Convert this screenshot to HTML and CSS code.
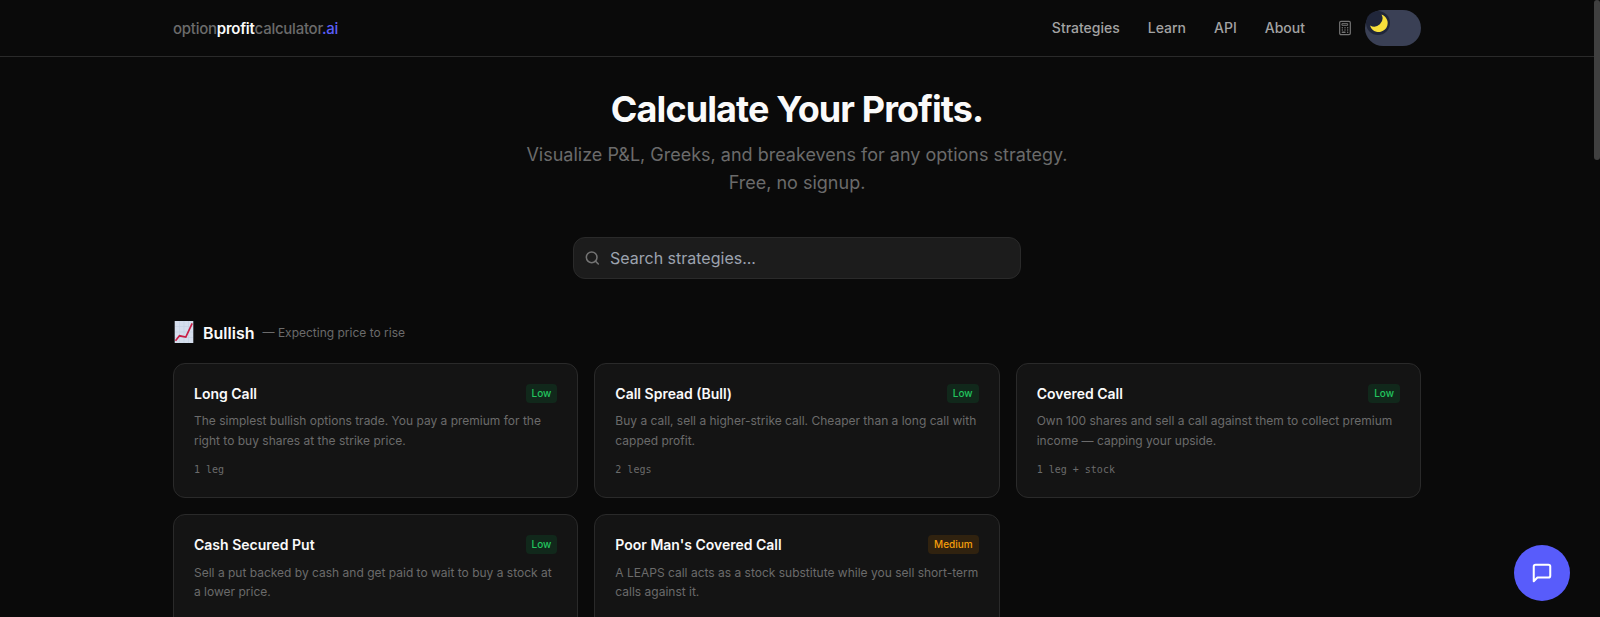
FILE: index.html
```html
<!DOCTYPE html>
<html lang="en">
<head>
<meta charset="utf-8">
<title>Option Profit Calculator</title>
<link rel="stylesheet" href="styles.css">
</head>
<body>
<div class="page">
  <header class="header">
    <div class="container header-row">
      <a class="logo">option<b>profit</b>calculator<i>.ai</i></a>
      <div class="header-right">
        <nav class="nav"><a>Strategies</a><a>Learn</a><a>API</a><a>About</a></nav>
        <svg class="calc" width="16" height="16" viewBox="0 0 24 24" fill="none" stroke="currentColor" stroke-width="1.8" stroke-linecap="round" stroke-linejoin="round"><rect x="4" y="2" width="16" height="20" rx="2"/><path d="M8 5.500h8v2.500H8z" stroke-width="1.500"/><path d="M8 11.500h.01M12 11.500h.01M16 11.500h.01M8 15h.01M12 15h.01M16 15h.01M8 18.500h4M16 18.500h.01" stroke-width="2.200"/></svg>
        <div class="toggle"><span class="knob"><svg width="20" height="20" viewBox="0 0 20 20"><path d="M13.500 1.500A9 9 0 1 1 2 12.500A8.300 8.300 0 0 0 13.500 1.500Z" fill="#f7df3b"/></svg></span></div>
      </div>
    </div>
  </header>
  <main class="container">
    <section class="hero">
      <h1>Calculate Your Profits.</h1>
      <p>Visualize P&amp;L, Greeks, and breakevens for any options strategy.<br>Free, no signup.</p>
      <div class="search">
        <svg width="16" height="16" viewBox="0 0 24 24" fill="none" stroke="currentColor" stroke-width="2.300" stroke-linecap="round"><circle cx="11.500" cy="11" r="8"/><path d="m21.500 21-4.300-4.300"/></svg>
        <span>Search strategies...</span>
      </div>
    </section>
    <div class="section-head">
      <svg width="22" height="26" viewBox="0 0 22 26"><path d="M1.700 1h18.600v22H1.700z" fill="#d5deed"/><path d="M6.500 1v22M11 1v22M15.500 1v22M2 6.500h18M2 12h18M2 17.500h18" stroke="#c3d0e2" stroke-width=".6"/><path d="M2.500 20.800l4-5 6.300 1.300 6.400-13.800" fill="none" stroke="#c81e45" stroke-width="1.700"/></svg>
      <h2>Bullish</h2><span>— Expecting price to rise</span>
    </div>
    <div class="cards">
      <article class="card"><div class="card-top"><h3>Long Call</h3><span class="badge">Low</span></div><p>The simplest bullish options trade. You pay a premium for the right to buy shares at the strike price.</p><div class="legs">1 leg</div></article>
      <article class="card"><div class="card-top"><h3>Call Spread (Bull)</h3><span class="badge">Low</span></div><p>Buy a call, sell a higher-strike call. Cheaper than a long call with capped profit.</p><div class="legs">2 legs</div></article>
      <article class="card"><div class="card-top"><h3>Covered Call</h3><span class="badge">Low</span></div><p>Own 100 shares and sell a call against them to collect premium income — capping your upside.</p><div class="legs">1 leg + stock</div></article>
      <article class="card"><div class="card-top"><h3>Cash Secured Put</h3><span class="badge">Low</span></div><p>Sell a put backed by cash and get paid to wait to buy a stock at a lower price.</p><div class="legs">1 leg</div></article>
      <article class="card"><div class="card-top"><h3>Poor Man's Covered Call</h3><span class="badge medium">Medium</span></div><p>A LEAPS call acts as a stock substitute while you sell short-term calls against it.</p><div class="legs">2 legs</div></article>
    </div>
  </main>
</div>
<div class="chat"><svg width="22" height="22" viewBox="0 0 24 24" fill="none" stroke="#fff" stroke-width="2.200" stroke-linecap="round" stroke-linejoin="round"><path d="M21 15a2 2 0 0 1-2 2H7l-4 4V5a2 2 0 0 1 2-2h14a2 2 0 0 1 2 2z"/></svg></div>
<div class="scroll-thumb"></div>
</body>
</html>
```
FILE: styles.css
```css
* { box-sizing: border-box; margin: 0; padding: 0; }
body { height: 617px; overflow: hidden; background: #0a0a0a; color: #fafafa; font-family: Inter, sans-serif; }
.page { height: 617px; margin-right: 6px; overflow: hidden; }
.container { max-width: 1280px; margin: 0 auto; padding: 0 16px; }
.header { height: 57px; border-bottom: 1px solid #2a2a2a; margin-right: -6px; padding-right: 6px; }
.header-row { height: 56px; display: flex; align-items: center; justify-content: space-between; }
.logo { padding-top: 2px; font-size: 15px; line-height: 24px; font-weight: 500; letter-spacing: -0.25px; color: #6b6b6b; }
.logo b { font-weight: 600; color: #fafafa; }
.logo i { font-style: normal; color: #5b5ef8; }
.header-right { display: flex; align-items: center; }
.nav { display: flex; gap: 28px; font-size: 14px; line-height: 20px; font-weight: 500; color: #a3a3a3; }
.calc { margin: 0 12px 0 32px; color: #737373; }
.toggle { width: 56px; height: 36px; border-radius: 18px; background: #3a4055; padding: 1px; }
.knob { display: flex; align-items: center; justify-content: center; width: 24px; height: 24px; border-radius: 50%; background: #20263a; }
.hero { padding-top: 32px; text-align: center; }
h1 { font-size: 36px; line-height: 40px; font-weight: 700; letter-spacing: -0.9px; }
.hero p { margin-top: 12px; font-size: 18px; line-height: 28px; color: #6b6b6b; }
.search { width: 448px; height: 42px; margin: 40px auto 0; padding: 0 10px; display: flex; align-items: center; gap: 10px; border: 1px solid #2a2a2a; border-radius: 12px; background: #1c1c1c; color: #737373; }
.search span { font-size: 16px; line-height: 24px; color: #9ca3af; }
.section-head { height: 28px; margin: 40px 0 16px; display: flex; align-items: center; gap: 8px; }
h2 { font-size: 16px; line-height: 24px; font-weight: 600; }
.section-head span { font-size: 12px; line-height: 16px; color: #6b6b6b; }
.cards { display: grid; grid-template-columns: repeat(3, 1fr); gap: 16px; }
.card { padding: 20px; border: 1px solid #2a2a2a; border-radius: 12px; background: #141414; }
.card-top { display: flex; justify-content: space-between; align-items: flex-start; margin-bottom: 8px; }
h3 { font-size: 14px; line-height: 19.25px; font-weight: 600; }
.badge { padding: 2px 6px; border-radius: 4px; background: #11281b; color: #22c55e; font-size: 10px; line-height: 15px; font-weight: 500; }
.badge.medium { background: #30220f; color: #f59e0b; }
.card p { font-size: 12px; line-height: 19.5px; color: #6b6b6b; }
.legs { margin-top: 12px; font: 10px/15px "DejaVu Sans Mono", monospace; color: #6b6b6b; }
.chat { position: fixed; right: 30px; bottom: 16px; width: 56px; height: 56px; border-radius: 50%; background: #585cfb; display: flex; align-items: center; justify-content: center; }
.scroll-thumb { position: fixed; top: 0; right: 0; width: 6px; height: 160px; border-radius: 3px; background: #404040; }
```
